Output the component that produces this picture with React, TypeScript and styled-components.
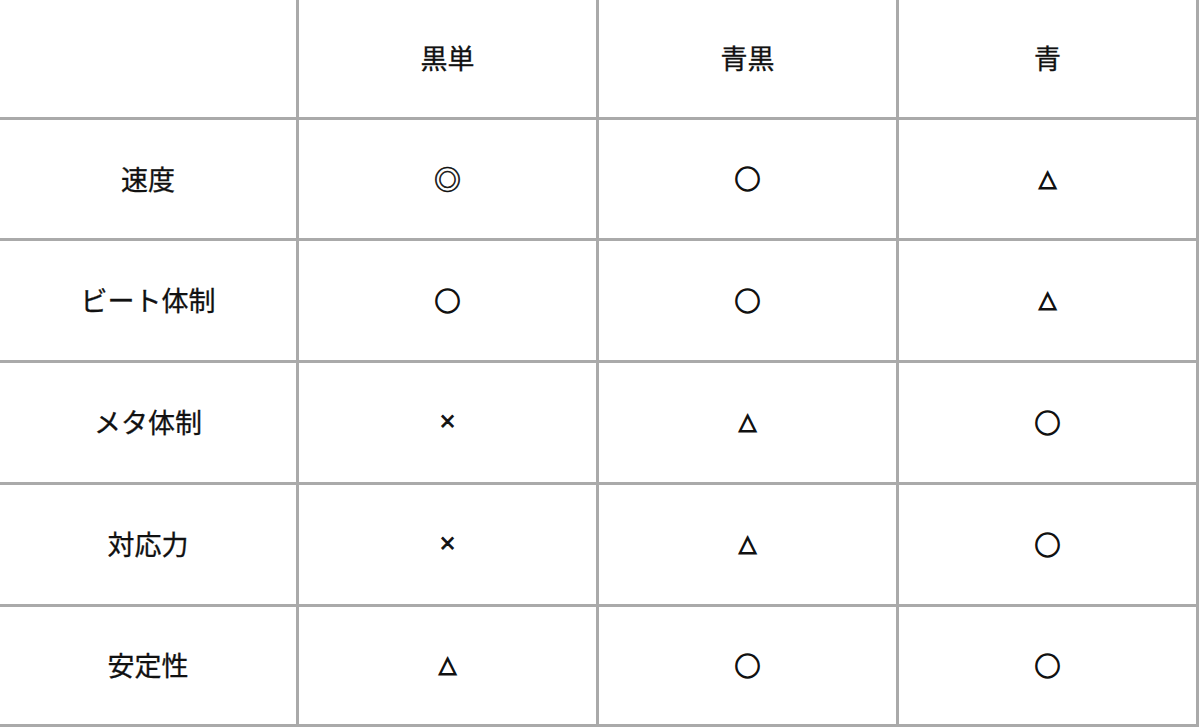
import { Fragment } from 'react'
import styled, { createGlobalStyle } from 'styled-components'

const GlobalStyle = createGlobalStyle`
  html, body {
    margin: 0;
    padding: 0;
    background: #fff;
  }

  body {
    font-family: "Noto Sans CJK JP", "Noto Sans", sans-serif;
    color: #111;
  }
`

const Table = styled.div`
  display: grid;
  grid-template-columns: 299px 300px 300px 300px;
  grid-template-rows: 120px 121px 122px 122px 122px 120px;
  width: 1199px;
`

const Cell = styled.div`
  display: flex;
  align-items: center;
  justify-content: center;
  border-right: 3px solid #aaa;
  border-bottom: 3px solid #aaa;
  font-size: 27px;
  font-weight: 400;
  line-height: 1;
  padding-bottom: 2px;
  -webkit-text-stroke: 0.3px #111;
`

type Kind = 'double' | 'circle' | 'triangle' | 'cross'

const Mark = styled.span<{ $kind: Kind }>`
  line-height: 1;
  ${(p) =>
    p.$kind === 'double' &&
    `
    font-size: 27px;
    -webkit-text-stroke: 0.6px #111;
  `}
  ${(p) =>
    p.$kind === 'circle' &&
    `
    font-size: 26px;
    -webkit-text-stroke: 1.3px #111;
  `}
  ${(p) =>
    p.$kind === 'triangle' &&
    `
    font-family: "DejaVu Sans", sans-serif;
    font-size: 23px;
    -webkit-text-stroke: 1.1px #111;
  `}
  ${(p) =>
    p.$kind === 'cross' &&
    `
    font-family: "DejaVu Sans", sans-serif;
    font-size: 21px;
    -webkit-text-stroke: 0.9px #111;
  `}
`

const kindOf: Record<string, Kind> = {
  '◎': 'double',
  '○': 'circle',
  '△': 'triangle',
  '×': 'cross',
}

const headers = ['', '黒単', '青黒', '青']

const rows: [string, string[]][] = [
  ['速度', ['◎', '○', '△']],
  ['ビート体制', ['○', '○', '△']],
  ['メタ体制', ['×', '△', '○']],
  ['対応力', ['×', '△', '○']],
  ['安定性', ['△', '○', '○']],
]

const App = () => {
  return (
    <>
      <GlobalStyle />
      <Table>
        {headers.map((h, i) => (
          <Cell key={'h' + i}>{h}</Cell>
        ))}
        {rows.map(([label, marks]) => (
          <Fragment key={label}>
            <Cell>{label}</Cell>
            {marks.map((m, j) => (
              <Cell key={j}>
                <Mark $kind={kindOf[m]}>{m}</Mark>
              </Cell>
            ))}
          </Fragment>
        ))}
      </Table>
    </>
  )
}

export default App
